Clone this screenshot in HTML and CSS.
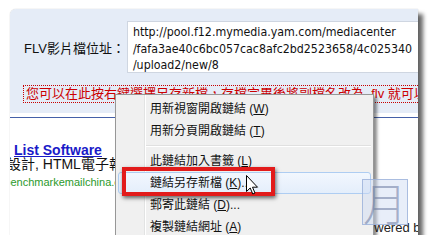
FILE: index.html
```html
<!DOCTYPE html>
<html>
<head>
<meta charset="utf-8">
<link rel="stylesheet" href="styles.css">
</head>
<body>
<div class="panel">
  <div class="top">
    <div class="field">
      <div class="label">FLV影片檔位址：</div>
      <div class="url">http://pool.f12.mymedia.yam.com/mediacenter<br>/fafa3ae40c6bc057cac8afc2bd2523658/4c025340<br>/upload2/new/8</div>
    </div>
    <div class="hint">您可以在此按右鍵選擇另存新檔，存檔完畢後將副檔名改為 .flv 就可以了</div>
  </div>
  <div class="rule"></div>
  <div class="content">
    <div class="ad">
      <div class="ad-title">List Software</div>
      <div class="ad-desc">設計, HTML電子報</div>
      <div class="ad-url">www.benchmarkemailchina.com</div>
    </div>
    <div class="powered">Powered by</div>
  </div>

  <div class="menu">
    <div class="item">用新視窗開啟鏈結 (<u>W</u>)</div>
    <div class="item">用新分頁開啟鏈結 (<u>T</u>)</div>
    <div class="sep"></div>
    <div class="item">此鏈結加入書籤 (<u>L</u>)</div>
    <div class="item hot">鏈結另存新檔 (<u>K</u>)...</div>
    <div class="item">郵寄此鏈結 (<u>D</u>)...</div>
    <div class="item">複製鏈結網址 (<u>A</u>)</div>
  </div>
  <div class="annot"></div>
  <svg class="cursor" width="13" height="20" viewBox="0 0 13 20">
    <path d="M0.5 0.5 L0.5 16.5 L4.2 13 L6.8 19 L9 18 L6.5 12.2 L11.5 12.2 Z" fill="#fff" stroke="#000" stroke-width="1" stroke-linejoin="round"/>
  </svg>
  <div class="watermark">月</div>
</div>
</body>
</html>
```

FILE: styles.css
```css
html, body {
  margin: 0;
  padding: 0;
  background: #ffffff;
}

body {
  font-family: "Liberation Sans", "Noto Sans CJK TC", sans-serif;
}

.panel {
  position: relative;
  margin: 9px 0 0 10px;
  width: 408px;
  height: 226px;
  overflow: hidden;
  background: #ffffff;
  border-top-left-radius: 6px;
  box-shadow: 0 0 1px rgba(0, 0, 0, 0.35), 5px 5px 4px rgba(0, 0, 0, 0.6);
}

.top {
  box-sizing: border-box;
  height: 104px;
  padding-top: 12px;
  background: #e5ecf7;
}

.field {
  display: flex;
  align-items: center;
  gap: 2px;
}

.label {
  padding-left: 14px;
  font-size: 13px;
  color: #111;
  white-space: nowrap;
}

.url {
  flex: 1;
  box-sizing: border-box;
  height: 52px;
  padding: 2px 5px;
  background: #fff;
  border: 1px solid #cfd6e1;
  border-right: none;
  font-family: "DejaVu Sans Condensed", "Liberation Sans", sans-serif;
  font-size: 12.3px;
  line-height: 16.5px;
  color: #111;
  white-space: nowrap;
}

.hint {
  box-sizing: border-box;
  margin: 12px 0 0 13px;
  height: 18px;
  padding-left: 2px;
  border: 1px dotted #c80000;
  border-right: none;
  line-height: 16px;
  font-size: 13px;
  color: #cc0000;
  white-space: nowrap;
}

.rule {
  margin-top: 4px;
  height: 1px;
  background: #4560a8;
}

.content {
  display: flex;
  height: 117px;
}

.ad {
  padding-top: 25px;
}

.ad-title {
  padding-left: 4px;
  font-size: 14px;
  font-weight: bold;
  line-height: 15px;
  color: #1a1ac8;
  text-decoration: underline;
  white-space: nowrap;
}

.ad-desc {
  text-indent: -3px;
  font-size: 14px;
  line-height: 13px;
  color: #111;
  white-space: nowrap;
}

.ad-url {
  text-indent: -32px;
  margin-top: 5px;
  font-size: 11px;
  line-height: 12px;
  color: #2c9a2c;
  white-space: nowrap;
}

.powered {
  margin-left: auto;
  margin-right: -9px;
  align-self: flex-end;
  font-size: 13px;
  line-height: 14px;
  color: #222;
  white-space: nowrap;
}

.menu {
  position: absolute;
  left: 105px;
  top: 85px;
  box-sizing: border-box;
  width: 259px;
  height: 160px;
  padding-top: 3px;
  border: 1px solid #979797;
  background: linear-gradient(to right, #f0f0f0 28px, #e2e3e3 28px, #e2e3e3 29px, #ffffff 29px, #ffffff 30px, #f0f0f0 30px);
  box-shadow: 3px 3px 3px rgba(0, 0, 0, 0.45);
  font-size: 12px;
  color: #111;
}

.item {
  box-sizing: border-box;
  height: 22px;
  line-height: 22px;
  padding-left: 34px;
  white-space: nowrap;
}

.item.hot {
  margin: 0 2px;
  padding-left: 31px;
  line-height: 20px;
  border: 1px solid #aecdf2;
  border-radius: 3px;
  background: linear-gradient(#f2f7fe, #e4eefb);
}

.sep {
  height: 1px;
  margin: 3px 2px 3px 30px;
  background: #e0e0e0;
  border-bottom: 1px solid #ffffff;
}

.annot {
  position: absolute;
  left: 112px;
  top: 158px;
  box-sizing: border-box;
  width: 153px;
  height: 29px;
  border: 4px solid #e21b1b;
  box-shadow: 1px 2px 4px rgba(0, 0, 0, 0.6);
}

.cursor {
  position: absolute;
  left: 236px;
  top: 166px;
}

.watermark {
  position: absolute;
  left: 352px;
  top: 170px;
  box-sizing: border-box;
  width: 46px;
  height: 46px;
  border: 1px solid rgba(150, 172, 215, 0.75);
  background: rgba(205, 218, 242, 0.45);
  font-family: "Noto Sans CJK TC", sans-serif;
  font-weight: 300;
  font-size: 44px;
  line-height: 44px;
  text-align: center;
  color: rgba(105, 120, 160, 0.55);
}
```
